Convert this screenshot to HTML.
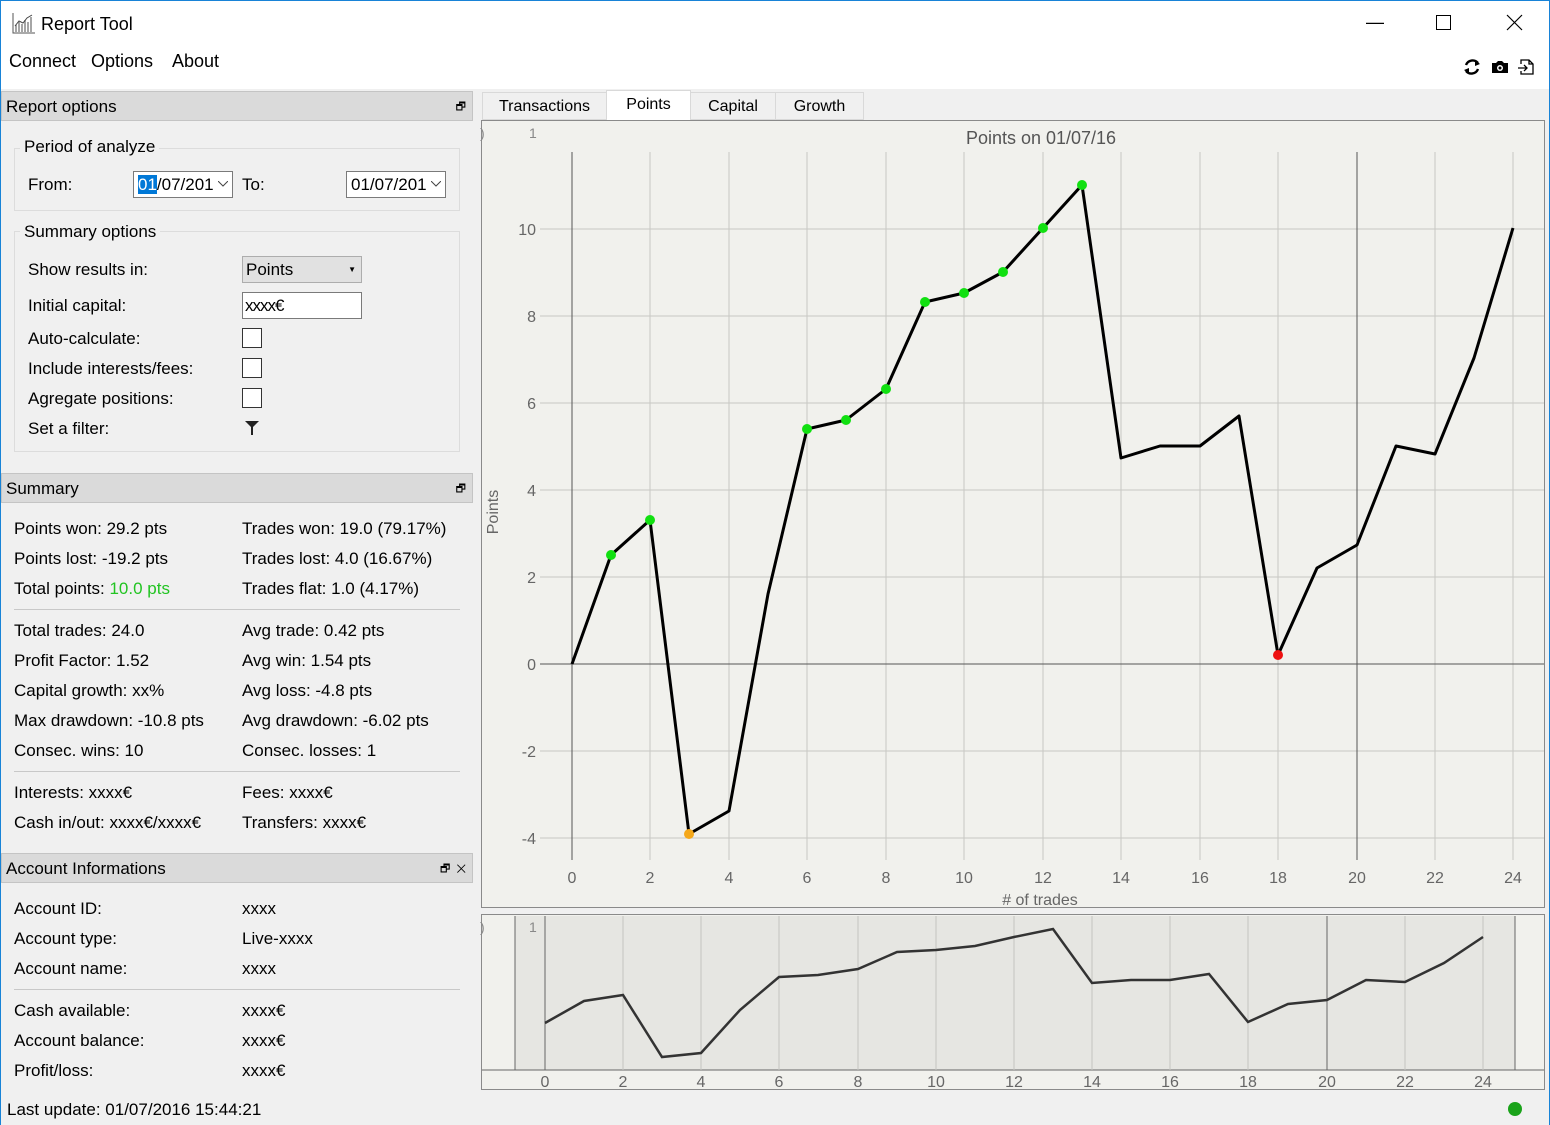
<!DOCTYPE html>
<html><head><meta charset="utf-8"><style>
*{margin:0;padding:0;box-sizing:border-box}
body{width:1550px;height:1125px;position:relative;background:#f0f0f0;font-family:"Liberation Sans",sans-serif;font-size:16px;color:#000;overflow:hidden}
.a{position:absolute;white-space:nowrap;line-height:22px;font-size:17px}
.hdr{position:absolute;left:1px;width:472px;height:30px;background:#dadada;border:1px solid #c4c4c4;line-height:30px;padding-left:4px;font-size:17px}
.grp{position:absolute;border:1px solid #dcdcdc}
.cb{position:absolute;width:20px;height:20px;border:1px solid #333;background:#fff}
.sep{position:absolute;left:14px;width:446px;height:1px;background:#c8c8c8}
.tab{position:absolute;top:92px;height:28px;line-height:27px;text-align:center;border:1px solid #d9d9d9;background:#f0f0f0}
</style></head><body>
<div style="position:absolute;left:0;top:0;width:1550px;height:89px;background:#fff"></div>
<div style="position:absolute;left:0;top:0;width:1550px;height:1125px;border:1px solid #1883d7;border-bottom:none;pointer-events:none;z-index:9"></div>
<svg class="a" style="left:12px;top:12px" width="24" height="22" viewBox="0 0 24 22"><path d="M1 1V21H23" stroke="#555" fill="none"/><path d="M4 20V13M7 20V10M10 20V12M13 20V8M16 20V10M19 20V5" stroke="#888" stroke-width="1.5"/><path d="M3 14L7 9L11 11L15 6L20 3" stroke="#444" fill="none"/></svg>
<div class="a" style="left:41px;top:13px;font-size:18px">Report Tool</div>
<div class="a" style="left:1366px;top:11px;font-size:18px">—</div>
<div style="position:absolute;left:1436px;top:15px;width:15px;height:15px;border:1.2px solid #000"></div>
<svg class="a" style="left:1506px;top:14px" width="17" height="17"><path d="M1 1L16 16M16 1L1 16" stroke="#000" stroke-width="1.2"/></svg>
<div class="a" style="left:9px;top:50px;font-size:18px">Connect</div>
<div class="a" style="left:91px;top:50px;font-size:18px">Options</div>
<div class="a" style="left:172px;top:50px;font-size:18px">About</div>
<svg class="a" style="left:1463px;top:58px" width="74" height="18" viewBox="0 0 74 18">
<path d="M3 7A7 7 0 0 1 15 5M15 11A7 7 0 0 1 3 13" stroke="#000" stroke-width="2.4" fill="none"/><path d="M12 2L17 6L12 8Z M6 16L1 12L6 10Z"/>
<path d="M29 5H33L35 3H39L41 5H45V15H29Z"/><circle cx="37" cy="10" r="3" fill="#fff"/><circle cx="37" cy="10" r="1.5"/>
<path d="M58 6V2H66L70 6V16H58V13M66 2V6H70M55 10H64M61 7L64 10L61 13" stroke="#000" stroke-width="1.3" fill="none"/>
</svg>

<div class="hdr" style="top:91px">Report options<span style="position:absolute;right:6px;top:0;font-size:11px">🗗</span></div>
<div class="grp" style="left:14px;top:148px;width:446px;height:63px"></div>
<div class="a" style="left:20px;top:136px;background:#f0f0f0;padding:0 4px">Period of analyze</div>
<div class="a" style="left:28px;top:174px">From:</div>
<div style="position:absolute;left:133px;top:171px;width:100px;height:27px;border:1px solid #7a7a7a;background:#fff"></div>
<div class="a" style="left:138px;top:174px"><span style="background:#0078d7;color:#fff">01</span>/07/201</div>
<svg class="a" style="left:218px;top:181px" width="10" height="6"><path d="M0 0L5 5L10 0" stroke="#444" fill="none"/></svg>
<div class="a" style="left:242px;top:174px">To:</div>
<div style="position:absolute;left:346px;top:171px;width:100px;height:27px;border:1px solid #7a7a7a;background:#fff"></div>
<div class="a" style="left:351px;top:174px">01/07/201</div>
<svg class="a" style="left:431px;top:181px" width="10" height="6"><path d="M0 0L5 5L10 0" stroke="#444" fill="none"/></svg>

<div class="grp" style="left:14px;top:231px;width:446px;height:221px"></div>
<div class="a" style="left:20px;top:221px;background:#f0f0f0;padding:0 4px">Summary options</div>
<div class="a" style="left:28px;top:259px">Show results in:</div>
<div style="position:absolute;left:242px;top:256px;width:120px;height:27px;border:1px solid #adadad;background:#e1e1e1;line-height:25px;padding-left:3px;font-size:17px">Points<span style="position:absolute;right:5px;top:0;font-size:8px">▼</span></div>
<div class="a" style="left:28px;top:295px">Initial capital:</div>
<div style="position:absolute;left:242px;top:292px;width:120px;height:27px;border:1px solid #7a7a7a;background:#fff;line-height:25px;padding-left:2px;letter-spacing:-1px;font-size:17px">xxxx€</div>
<div class="a" style="left:28px;top:328px">Auto-calculate:</div><div class="cb" style="left:242px;top:328px"></div>
<div class="a" style="left:28px;top:358px">Include interests/fees:</div><div class="cb" style="left:242px;top:358px"></div>
<div class="a" style="left:28px;top:388px">Agregate positions:</div><div class="cb" style="left:242px;top:388px"></div>
<div class="a" style="left:28px;top:418px">Set a filter:</div>
<svg class="a" style="left:244px;top:420px" width="16" height="16"><path d="M1 1H15L9 7V15H7V7Z" fill="#222"/></svg>

<div class="hdr" style="top:473px">Summary<span style="position:absolute;right:6px;top:0;font-size:11px">🗗</span></div>
<div class="a" style="left:14px;top:518px">Points won: 29.2 pts</div><div class="a" style="left:242px;top:518px">Trades won: 19.0 (79.17%)</div>
<div class="a" style="left:14px;top:548px">Points lost: -19.2 pts</div><div class="a" style="left:242px;top:548px">Trades lost: 4.0 (16.67%)</div>
<div class="a" style="left:14px;top:578px">Total points: <span style="color:#22c422">10.0 pts</span></div><div class="a" style="left:242px;top:578px">Trades flat: 1.0 (4.17%)</div>
<div class="sep" style="top:609px"></div>
<div class="a" style="left:14px;top:620px">Total trades: 24.0</div><div class="a" style="left:242px;top:620px">Avg trade: 0.42 pts</div>
<div class="a" style="left:14px;top:650px">Profit Factor: 1.52</div><div class="a" style="left:242px;top:650px">Avg win: 1.54 pts</div>
<div class="a" style="left:14px;top:680px">Capital growth: xx%</div><div class="a" style="left:242px;top:680px">Avg loss: -4.8 pts</div>
<div class="a" style="left:14px;top:710px">Max drawdown: -10.8 pts</div><div class="a" style="left:242px;top:710px">Avg drawdown: -6.02 pts</div>
<div class="a" style="left:14px;top:740px">Consec. wins: 10</div><div class="a" style="left:242px;top:740px">Consec. losses: 1</div>
<div class="sep" style="top:771px"></div>
<div class="a" style="left:14px;top:782px">Interests: xxxx€</div><div class="a" style="left:242px;top:782px">Fees: xxxx€</div>
<div class="a" style="left:14px;top:812px">Cash in/out: xxxx€/xxxx€</div><div class="a" style="left:242px;top:812px">Transfers: xxxx€</div>

<div class="hdr" style="top:853px">Account Informations<span style="position:absolute;right:6px;top:0;font-size:11px">🗗&nbsp;&nbsp;✕</span></div>
<div class="a" style="left:14px;top:898px">Account ID:</div><div class="a" style="left:242px;top:898px">xxxx</div>
<div class="a" style="left:14px;top:928px">Account type:</div><div class="a" style="left:242px;top:928px">Live-xxxx</div>
<div class="a" style="left:14px;top:958px">Account name:</div><div class="a" style="left:242px;top:958px">xxxx</div>
<div class="sep" style="top:989px"></div>
<div class="a" style="left:14px;top:1000px">Cash available:</div><div class="a" style="left:242px;top:1000px">xxxx€</div>
<div class="a" style="left:14px;top:1030px">Account balance:</div><div class="a" style="left:242px;top:1030px">xxxx€</div>
<div class="a" style="left:14px;top:1060px">Profit/loss:</div><div class="a" style="left:242px;top:1060px">xxxx€</div>
<div class="a" style="left:7px;top:1099px">Last update: 01/07/2016 15:44:21</div>
<div style="position:absolute;left:1508px;top:1102px;width:14px;height:14px;border-radius:50%;background:#1aa31a"></div>

<div class="tab" style="left:482px;width:125px">Transactions</div>
<div class="tab" style="left:606px;width:85px;background:#fff;top:90px;height:30px;border-bottom:none">Points</div>
<div class="tab" style="left:690px;width:86px">Capital</div>
<div class="tab" style="left:775px;width:89px">Growth</div>

<svg style="position:absolute;left:0;top:0" width="1550" height="1125" font-family="Liberation Sans,sans-serif" font-size="16">
<rect x="481.5" y="120.5" width="1063" height="787" fill="#f1f1ed" stroke="#8a8a8a"/>
<g stroke="#c8c8c4">
<path d="M650 152V860M729 152V860M807 152V860M886 152V860M964 152V860M1043 152V860M1121 152V860M1200 152V860M1278 152V860M1435 152V860M1513 152V860"/>
<path d="M540 229H1544M540 316H1544M540 403H1544M540 490H1544M540 577H1544M540 751H1544M540 838H1544"/>
</g>
<g stroke="#555"><path d="M572 152V860M1357 152V860M540 664H1544"/></g>
<text x="1041" y="144" text-anchor="middle" font-size="18" fill="#555">Points on 01/07/16</text>
<text x="529" y="138" fill="#888" font-size="14">1</text><text x="480" y="138" fill="#888" font-size="14">)</text>
<g fill="#666" text-anchor="end">
<text x="536" y="235">10</text><text x="536" y="322">8</text><text x="536" y="409">6</text><text x="536" y="496">4</text><text x="536" y="583">2</text><text x="536" y="670">0</text><text x="536" y="757">-2</text><text x="536" y="844">-4</text></g>
<g fill="#666" text-anchor="middle">
<text x="572" y="883">0</text><text x="650" y="883">2</text><text x="729" y="883">4</text><text x="807" y="883">6</text><text x="886" y="883">8</text><text x="964" y="883">10</text><text x="1043" y="883">12</text><text x="1121" y="883">14</text><text x="1200" y="883">16</text><text x="1278" y="883">18</text><text x="1357" y="883">20</text><text x="1435" y="883">22</text><text x="1513" y="883">24</text>
<text x="1040" y="905">#  of trades</text></g>
<text transform="translate(498,512) rotate(-90)" text-anchor="middle" fill="#666">Points</text>
<polyline fill="none" stroke="#000" stroke-width="3" stroke-linejoin="round" points="572,664 611,555 650,520 689,834 729,811 768,594 807,429 846,420 886,389 925,302 964,293 1003,272 1043,228 1082,185 1121,458 1160,446 1200,446 1239,416 1278,655 1317,568 1357,545 1396,446 1435,454 1474,358 1513,228"/>
<g fill="#11e011"><circle cx="611" cy="555" r="5"/><circle cx="650" cy="520" r="5"/><circle cx="807" cy="429" r="5"/><circle cx="846" cy="420" r="5"/><circle cx="886" cy="389" r="5"/><circle cx="925" cy="302" r="5"/><circle cx="964" cy="293" r="5"/><circle cx="1003" cy="272" r="5"/><circle cx="1043" cy="228" r="5"/><circle cx="1082" cy="185" r="5"/></g>
<circle cx="689" cy="834" r="5" fill="#f5a81a"/><circle cx="1278" cy="655" r="5" fill="#ee1111"/>

<rect x="481.5" y="914.5" width="1063" height="175" fill="#f1f1ed" stroke="#8a8a8a"/>
<rect x="515" y="916" width="1000" height="154" fill="#e6e6e2"/>
<path d="M515 916V1070M1515 916V1070M482 1070H1544M545 916V1070M1327 916V1070" stroke="#666"/>
<path d="M623 916V1070M701 916V1070M779 916V1070M858 916V1070M936 916V1070M1014 916V1070M1092 916V1070M1170 916V1070M1248 916V1070M1405 916V1070M1483 916V1070" stroke="#c4c4c0"/>
<text x="529" y="932" fill="#888" font-size="14">1</text><text x="480" y="932" fill="#888" font-size="14">)</text>
<polyline fill="none" stroke="#333" stroke-width="2.5" points="545,1023 584,1001 623,995 662,1057 701,1053 740,1010 779,977 818,975 858,969 897,952 936,950 975,946 1014,937 1053,929 1092,983 1131,980 1170,980 1209,974 1248,1022 1288,1004 1327,1000 1366,980 1405,982 1444,963 1483,937"/>
<g fill="#666" text-anchor="middle">
<text x="545" y="1087">0</text><text x="623" y="1087">2</text><text x="701" y="1087">4</text><text x="779" y="1087">6</text><text x="858" y="1087">8</text><text x="936" y="1087">10</text><text x="1014" y="1087">12</text><text x="1092" y="1087">14</text><text x="1170" y="1087">16</text><text x="1248" y="1087">18</text><text x="1327" y="1087">20</text><text x="1405" y="1087">22</text><text x="1483" y="1087">24</text></g>
</svg>
</body></html>
